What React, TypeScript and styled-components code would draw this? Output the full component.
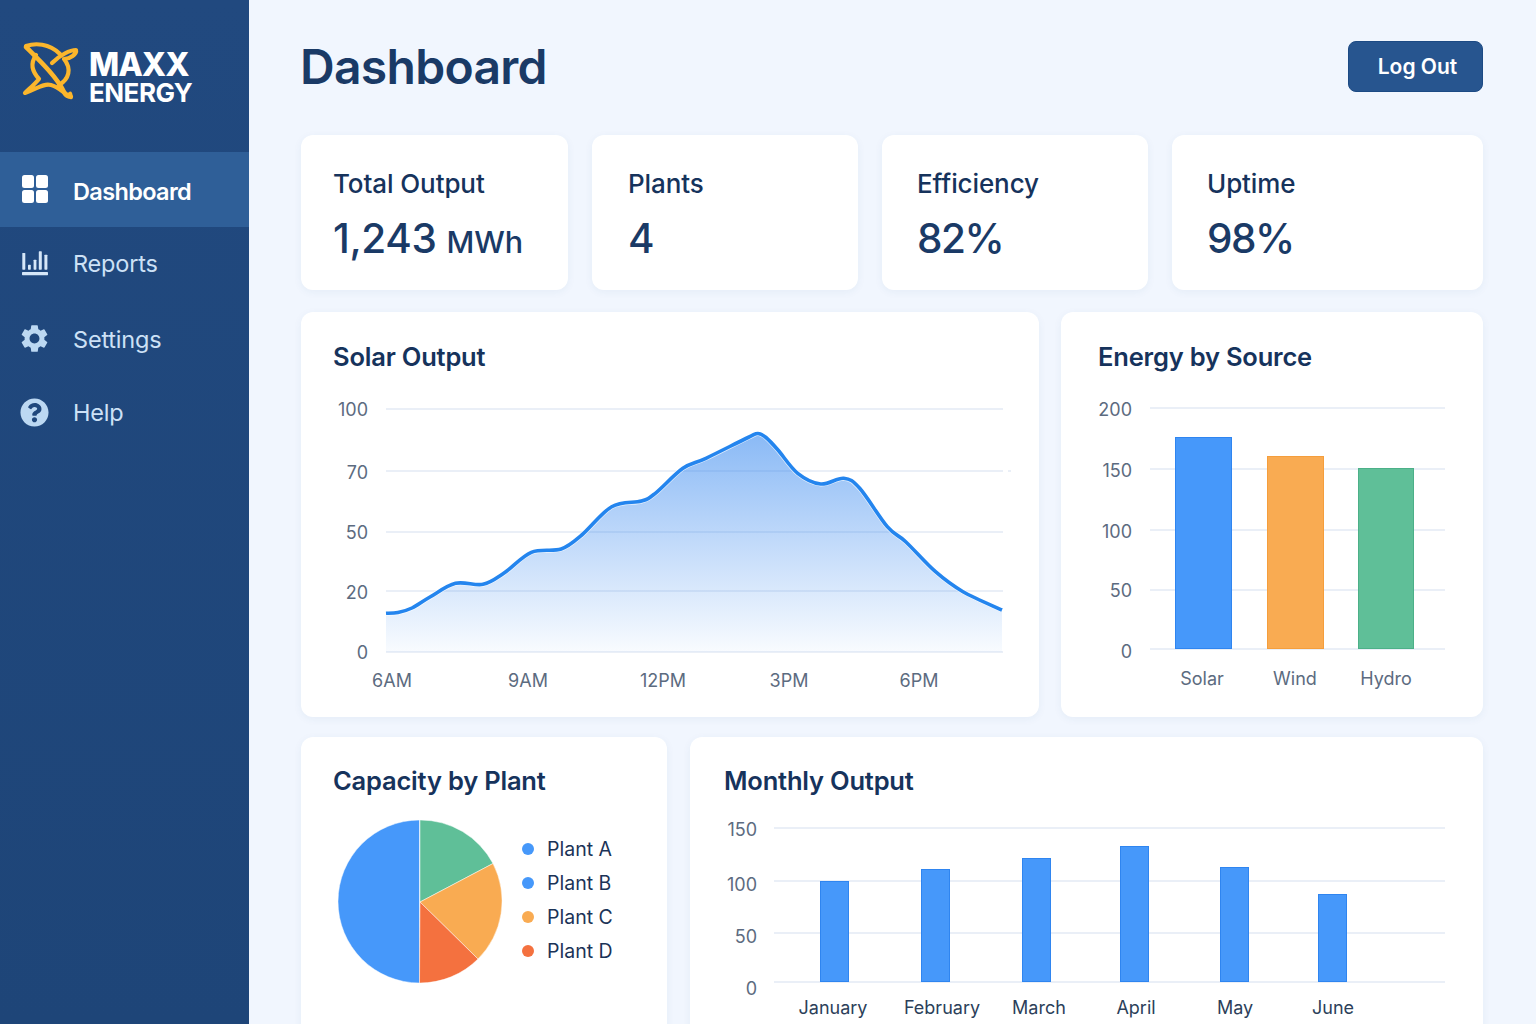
import * as React from 'react';
import styled, { createGlobalStyle } from 'styled-components';
import { FaQuestionCircle } from 'react-icons/fa';
import { MdSettings } from 'react-icons/md';

const GlobalStyle = createGlobalStyle`
  html, body {
    margin: 0;
    padding: 0;
    background: #f1f6fe;
    font-family: Inter, "Noto Sans", "Liberation Sans", sans-serif;
    color: #16335c;
  }
`;

const Page = styled.div`
  display: flex;
  width: 1536px;
  height: 1024px;
  overflow: hidden;
`;

const Sidebar = styled.aside`
  flex: 0 0 249px;
  background: linear-gradient(180deg, #21497f 0%, #1e4578 100%);
`;

const Brand = styled.div`
  display: flex;
  align-items: flex-start;
  gap: 4px;
  height: 152px;
  box-sizing: border-box;
  padding: 35px 0 0 15px;
`;

const BrandText = styled.div`
  display: flex;
  flex-direction: column;
  padding-top: 13.5px;
  color: #fff;
`;

const BrandMain = styled.span`
  font-size: 32px;
  font-weight: 800;
  line-height: 32px;
  letter-spacing: -1px;
`;

const BrandSub = styled.span`
  font-size: 26px;
  font-weight: 700;
  line-height: 24px;
  letter-spacing: -0.5px;
`;

const NavItem = styled.a<{ $active?: boolean }>`
  display: flex;
  align-items: center;
  gap: 23px;
  height: 74.5px;
  box-sizing: border-box;
  padding-left: 20px;
  font-size: 23.5px;
  letter-spacing: ${p => (p.$active ? '-0.65px' : '-0.2px')};
  font-weight: ${p => (p.$active ? 600 : 400)};
  color: ${p => (p.$active ? '#fff' : '#cde1f6')};
  background: ${p => (p.$active ? '#2f5f98' : 'transparent')};
`;

const NavLabel = styled.span<{ $drop?: number }>`
  margin-top: ${p => p.$drop ?? 0}px;
`;

const NavIcon = styled.span<{ $colour?: string }>`
  display: flex;
  align-items: center;
  justify-content: center;
  width: 30px;
  height: 30px;
  color: ${p => p.$colour || '#fff'};
`;

const GearIcon = styled(MdSettings)`
  flex: none;
  margin-right: 2px;
`;

const HelpIcon = styled(FaQuestionCircle)`
  flex: none;
  margin-right: 2px;
`;

const Main = styled.main`
  flex: 1;
  min-width: 0;
  box-sizing: border-box;
  padding: 41px 53px 0 52px;
`;

const Header = styled.header`
  display: flex;
  align-items: center;
  justify-content: space-between;
  height: 51px;
  margin-bottom: 43px;
`;

const Title = styled.h1`
  margin: 0 0 0 -1px;
  font-size: 48px;
  font-weight: 600;
  letter-spacing: -0.7px;
  line-height: 51px;
  color: #1a3a66;
`;

const LogOut = styled.button`
  width: 135px;
  height: 51px;
  padding: 0 0 0 4px;
  border: 1px solid #1c4a84;
  border-radius: 8px;
  background: #27558f;
  color: #fff;
  font-family: inherit;
  font-size: 21px;
  font-weight: 600;
`;

const StatRow = styled.section`
  display: grid;
  grid-template-columns: 267px 266px 266px 1fr;
  gap: 24px;
  height: 155px;
  margin-bottom: 22px;
`;

const Card = styled.div`
  background: #fff;
  border-radius: 12px;
  box-shadow: 0 2px 8px rgba(40, 80, 140, 0.06);
  box-sizing: border-box;
`;

const StatCard = styled(Card)<{ $inset: number }>`
  padding: 34px 0 0 ${p => p.$inset}px;
`;

const StatLabel = styled.div`
  font-size: 26px;
  font-weight: 500;
  line-height: 30px;
  letter-spacing: -0.1px;
`;

const StatValue = styled.div<{ $tight?: boolean }>`
  margin-top: 15px;
  font-size: 40.5px;
  font-weight: 500;
  line-height: 50px;
  letter-spacing: ${p => (p.$tight ? '-1.5px' : '-0.4px')};
  color: #1a3a66;
`;

const StatUnit = styled.span`
  margin-left: 10px;
  font-size: 30.5px;
  letter-spacing: 0;
`;

const ChartRow = styled.section<{ $columns: string; $height: number; $gap: number }>`
  display: grid;
  grid-template-columns: ${p => p.$columns};
  column-gap: ${p => p.$gap}px;
  height: ${p => p.$height}px;
  margin-bottom: 20px;
`;

const ChartCard = styled(Card)<{ $inset: number; $top: number }>`
  padding: ${p => p.$top}px 0 0 ${p => p.$inset}px;
`;

const ChartTitle = styled.h2`
  margin: 0;
  font-size: 25.5px;
  font-weight: 600;
  line-height: 30px;
  letter-spacing: -0.2px;
  color: #16335c;
`;

const Chart = styled.svg<{ $gap?: number }>`
  display: block;
  overflow: visible;
  margin-top: ${p => p.$gap ?? 0}px;
`;

const PieSvg = styled(Chart)`
  margin-left: 3px;
`;

const GridLine = styled.line`
  stroke: #e3eaf4;
  stroke-width: 1.5;
`;

const AxisText = styled.text<{ $dark?: boolean }>`
  font-family: Inter, "Noto Sans", sans-serif;
  font-size: 18px;
  dominant-baseline: central;
  fill: ${p => (p.$dark ? '#2c3f5a' : '#5c6b80')};
`;

const PieRow = styled.div`
  display: flex;
  align-items: center;
  margin-top: 23px;
`;

const Legend = styled.ul`
  list-style: none;
  margin: 0 0 0 18px;
  padding: 0 0 6px;
`;

const LegendItem = styled.li`
  display: flex;
  align-items: center;
  gap: 13px;
  height: 34px;
  font-size: 19.5px;
  color: #1b3357;
`;

const Dot = styled.span<{ $colour: string }>`
  width: 12px;
  height: 12px;
  border-radius: 50%;
  background: ${p => p.$colour};
`;

const BLUE = '#4698fa';
const ORANGE = '#f9ab52';
const GREEN = '#5fbf98';
const RED = '#f4713f';

const solarPoints: [number, number][] = [
  [386, 613.3], [398, 612.5], [412, 608], [430, 597], [455.5, 583.3], [483, 584.3], [503.7, 573.3],
  [531.3, 552.3], [561.2, 549], [581.8, 535], [611.7, 506.7], [641.5, 501], [655.3, 493.3],
  [682.9, 468.3], [705.9, 458.3], [748, 437.5], [758, 433.5], [766, 437.5], [778, 450], [797.7, 473.3], [820.7, 484],
  [843.7, 478.3], [859.7, 488.3], [887.3, 526.7], [905.7, 541.7], [935.5, 571.7], [963, 591.7],
  [1002, 610],
];

// catmull-rom through the points, gives the soft bumps of the curve
const smoothPath = (pts: [number, number][]) => {
  let d = `M${pts[0][0]} ${pts[0][1]}`;
  for (let i = 0; i < pts.length - 1; i++) {
    const p0 = pts[Math.max(i - 1, 0)];
    const p1 = pts[i];
    const p2 = pts[i + 1];
    const p3 = pts[Math.min(i + 2, pts.length - 1)];
    const c1x = p1[0] + (p2[0] - p0[0]) / 6;
    const c1y = p1[1] + (p2[1] - p0[1]) / 6;
    const c2x = p2[0] - (p3[0] - p1[0]) / 6;
    const c2y = p2[1] - (p3[1] - p1[1]) / 6;
    d += ` C${c1x} ${c1y} ${c2x} ${c2y} ${p2[0]} ${p2[1]}`;
  }
  return d;
};

const solarLine = smoothPath(solarPoints);

const LogoMark = () => (
  <svg width="70" height="75" viewBox="0 0 70 75" fill="none" stroke="#fbb62c" strokeWidth="4.2" strokeLinecap="round" strokeLinejoin="round">
    <path d="M11 11 C20 8 34 8 45 19" />
    <path d="M11 12 C24 25 42 42 49 57 C51 62 57 63 55 59" strokeWidth="4.6" />
    <path d="M21 20 C15 29 17 36 24 44 C19 50 14 54 10 58 C22 54 28 48 36 50 C44 52 48 58 56 62" />
    <path d="M37 28 C45 20 55 15 61 15 C62 19 55 24 49 24 C57 34 54 44 44 50" />
  </svg>
);

const DashboardIcon = () => (
  <svg width="26" height="28" viewBox="0 0 26 28" fill="currentColor">
    <rect x="0" y="0" width="12" height="13" rx="2.5" />
    <rect x="14" y="0" width="12" height="13" rx="2.5" />
    <rect x="0" y="15" width="12" height="13" rx="2.5" />
    <rect x="14" y="15" width="12" height="13" rx="2.5" />
  </svg>
);

const ReportsIcon = () => (
  <svg width="26" height="25" viewBox="0 0 26 25" fill="currentColor">
    <rect x="0.3" y="2" width="3" height="16.7" rx="0.6" />
    <rect x="6" y="13.7" width="2.8" height="5" rx="0.6" />
    <rect x="11.6" y="8.7" width="2.8" height="10" rx="0.6" />
    <rect x="16.8" y="0.3" width="3" height="18.4" rx="0.6" />
    <rect x="22.4" y="3.7" width="3" height="15" rx="0.6" />
    <rect x="0" y="21" width="26" height="3.2" rx="0.6" />
  </svg>
);

const SolarChart = () => (
  <Chart $gap={18} width="690" height="310" viewBox="333 390 690 310">
    <defs>
      <linearGradient id="solarFill" x1="0" y1="433" x2="0" y2="652" gradientUnits="userSpaceOnUse">
        <stop offset="0" stopColor="#2a80ee" stopOpacity="0.55" />
        <stop offset="1" stopColor="#2a80ee" stopOpacity="0.03" />
      </linearGradient>
    </defs>
    {[409, 471, 532, 591, 652].map(y => (
      <GridLine key={y} x1="386" x2="1003" y1={y} y2={y} />
    ))}
    <GridLine x1="1008" x2="1011" y1="471" y2="471" />
    <path d={`${solarLine} L1002 652 L386 652 Z`} fill="url(#solarFill)" />
    <path d={solarLine} fill="none" stroke="#fff" strokeOpacity="0.7" strokeWidth="5" />
    <path d={solarLine} fill="none" stroke="#2485ee" strokeWidth="3.6" />
    {[['100', 409], ['70', 472], ['50', 532], ['20', 592], ['0', 652]].map(([t, y]) => (
      <AxisText key={t} x="368" y={y} textAnchor="end">{t}</AxisText>
    ))}
    {[['6AM', 392], ['9AM', 528], ['12PM', 663], ['3PM', 789], ['6PM', 919]].map(([t, x]) => (
      <AxisText key={t} x={x} y="680" textAnchor="middle">{t}</AxisText>
    ))}
  </Chart>
);

const sourceBars = [
  { name: 'Solar', x: 1175, w: 57, top: 437, fill: BLUE, line: '#2f85f0', label: 1202 },
  { name: 'Wind', x: 1267, w: 57, top: 456, fill: ORANGE, line: '#f59e3c', label: 1295 },
  { name: 'Hydro', x: 1358, w: 56, top: 468, fill: GREEN, line: '#4cb088', label: 1386 },
];

const SourceChart = () => (
  <Chart $gap={18} width="360" height="310" viewBox="1098 390 360 310">
    {[408, 469, 530, 590, 649].map(y => (
      <GridLine key={y} x1="1150" x2="1445" y1={y} y2={y} />
    ))}
    {sourceBars.map(b => (
      <g key={b.name}>
        <rect x={b.x + 0.5} y={b.top + 0.5} width={b.w - 1} height={648 - b.top} fill={b.fill} stroke={b.line} />
        <AxisText x={b.label} y="678" textAnchor="middle">{b.name}</AxisText>
      </g>
    ))}
    {[['200', 409], ['150', 470], ['100', 531], ['50', 590], ['0', 651]].map(([t, y]) => (
      <AxisText key={t} x="1132" y={y} textAnchor="end">{t}</AxisText>
    ))}
  </Chart>
);

const PieChart = () => (
  <PieSvg width="168" height="168" viewBox="336 819 168 168">
    <g stroke="#fff" strokeOpacity="0.6" strokeWidth="0.8" strokeLinejoin="round">
      <path d="M419.5 820 A81.5 81.5 0 0 0 419.5 983 Z" fill={BLUE} />
      <path d="M420 902 L420 820 A82 82 0 0 1 493 863.5 Z" fill={GREEN} />
      <path d="M420 902 L493 863.5 A82 82 0 0 1 478 959 Z" fill={ORANGE} />
      <path d="M420 902 L478 959 A82 82 0 0 1 419.5 983 Z" fill={RED} />
    </g>
  </PieSvg>
);

const plants = [
  { name: 'Plant A', colour: BLUE },
  { name: 'Plant B', colour: BLUE },
  { name: 'Plant C', colour: ORANGE },
  { name: 'Plant D', colour: RED },
];

const months = [
  { name: 'January', x: 820, top: 881, label: 833 },
  { name: 'February', x: 921, top: 869, label: 942 },
  { name: 'March', x: 1022, top: 858, label: 1039 },
  { name: 'April', x: 1120, top: 846, label: 1136 },
  { name: 'May', x: 1220, top: 867, label: 1235 },
  { name: 'June', x: 1318, top: 894, label: 1333 },
];

const MonthlyChart = () => (
  <Chart $gap={14} width="746" height="214" viewBox="724 810 746 214">
    {[828, 881, 933, 982].map(y => (
      <GridLine key={y} x1="774" x2="1445" y1={y} y2={y} />
    ))}
    {months.map(m => (
      <g key={m.name}>
        <rect x={m.x + 0.5} y={m.top + 0.5} width="28" height={981 - m.top} fill={BLUE} stroke="#2f85f0" />
        <AxisText $dark x={m.label} y="1007" textAnchor="middle">{m.name}</AxisText>
      </g>
    ))}
    {[['150', 829], ['100', 884], ['50', 936], ['0', 988]].map(([t, y]) => (
      <AxisText key={t} x="757" y={y} textAnchor="end">{t}</AxisText>
    ))}
  </Chart>
);

export default function App() {
  return (
    <Page>
      <GlobalStyle />
      <Sidebar>
        <Brand>
          <LogoMark />
          <BrandText>
            <BrandMain>MAXX</BrandMain>
            <BrandSub>ENERGY</BrandSub>
          </BrandText>
        </Brand>
        <nav>
          <NavItem $active>
            <NavIcon><DashboardIcon /></NavIcon>
            <NavLabel $drop={4}>Dashboard</NavLabel>
          </NavItem>
          <NavItem>
            <NavIcon $colour="#d6e7f8"><ReportsIcon /></NavIcon>
            <NavLabel>Reports</NavLabel>
          </NavItem>
          <NavItem>
            <NavIcon $colour="#bcd8f2"><GearIcon size={33} /></NavIcon>
            <NavLabel $drop={2}>Settings</NavLabel>
          </NavItem>
          <NavItem>
            <NavIcon $colour="#bcd8f2"><HelpIcon size={29} /></NavIcon>
            <NavLabel>Help</NavLabel>
          </NavItem>
        </nav>
      </Sidebar>
      <Main>
        <Header>
          <Title>Dashboard</Title>
          <LogOut>Log Out</LogOut>
        </Header>
        <StatRow>
          <StatCard $inset={32}>
            <StatLabel>Total Output</StatLabel>
            <StatValue>1,243<StatUnit>MWh</StatUnit></StatValue>
          </StatCard>
          <StatCard $inset={36}>
            <StatLabel>Plants</StatLabel>
            <StatValue>4</StatValue>
          </StatCard>
          <StatCard $inset={35}>
            <StatLabel>Efficiency</StatLabel>
            <StatValue $tight>82%</StatValue>
          </StatCard>
          <StatCard $inset={35}>
            <StatLabel>Uptime</StatLabel>
            <StatValue $tight>98%</StatValue>
          </StatCard>
        </StatRow>
        <ChartRow $columns="738px 422px" $height={405} $gap={22}>
          <ChartCard $inset={32} $top={30}>
            <ChartTitle>Solar Output</ChartTitle>
            <SolarChart />
          </ChartCard>
          <ChartCard $inset={37} $top={30}>
            <ChartTitle>Energy by Source</ChartTitle>
            <SourceChart />
          </ChartCard>
        </ChartRow>
        <ChartRow $columns="366px 793px" $height={320} $gap={23}>
          <ChartCard $inset={32} $top={29}>
            <ChartTitle>Capacity by Plant</ChartTitle>
            <PieRow>
              <PieChart />
              <Legend>
                {plants.map(p => (
                  <LegendItem key={p.name}>
                    <Dot $colour={p.colour} />
                    {p.name}
                  </LegendItem>
                ))}
              </Legend>
            </PieRow>
          </ChartCard>
          <ChartCard $inset={34} $top={29}>
            <ChartTitle>Monthly Output</ChartTitle>
            <MonthlyChart />
          </ChartCard>
        </ChartRow>
      </Main>
    </Page>
  );
}
